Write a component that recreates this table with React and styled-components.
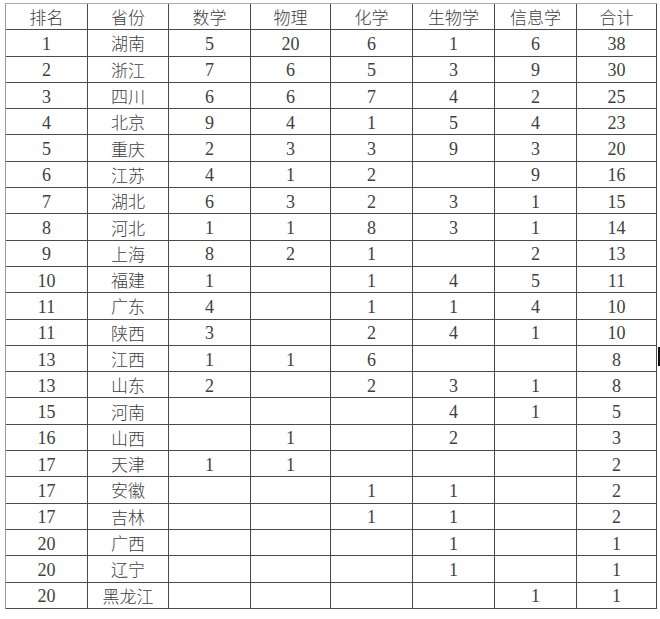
import React from "react";
import styled, { createGlobalStyle } from "styled-components";

const rows = [
  ["1", "湖南", "5", "20", "6", "1", "6", "38"],
  ["2", "浙江", "7", "6", "5", "3", "9", "30"],
  ["3", "四川", "6", "6", "7", "4", "2", "25"],
  ["4", "北京", "9", "4", "1", "5", "4", "23"],
  ["5", "重庆", "2", "3", "3", "9", "3", "20"],
  ["6", "江苏", "4", "1", "2", "", "9", "16"],
  ["7", "湖北", "6", "3", "2", "3", "1", "15"],
  ["8", "河北", "1", "1", "8", "3", "1", "14"],
  ["9", "上海", "8", "2", "1", "", "2", "13"],
  ["10", "福建", "1", "", "1", "4", "5", "11"],
  ["11", "广东", "4", "", "1", "1", "4", "10"],
  ["11", "陕西", "3", "", "2", "4", "1", "10"],
  ["13", "江西", "1", "1", "6", "", "", "8"],
  ["13", "山东", "2", "", "2", "3", "1", "8"],
  ["15", "河南", "", "", "", "4", "1", "5"],
  ["16", "山西", "", "1", "", "2", "", "3"],
  ["17", "天津", "1", "1", "", "", "", "2"],
  ["17", "安徽", "", "", "1", "1", "", "2"],
  ["17", "吉林", "", "", "1", "1", "", "2"],
  ["20", "广西", "", "", "", "1", "", "1"],
  ["20", "辽宁", "", "", "", "1", "", "1"],
  ["20", "黑龙江", "", "", "", "", "1", "1"],
];

const headers = ["排名", "省份", "数学", "物理", "化学", "生物学", "信息学", "合计"];

const GlobalStyle = createGlobalStyle`
  html, body {
    margin: 0;
    padding: 0;
    background: #ffffff;
  }
`;

const Page = styled.div`
  position: relative;
  width: 660px;
  height: 619px;
  padding: 3px 0 0 5px;
  box-sizing: border-box;
  overflow: hidden;
`;

const Grid = styled.div`
  display: grid;
  grid-template-columns: 82px 81px 82px 80px 82px 82px 82px 80px;
  grid-auto-rows: 26.3px;
  width: 652px;
  box-sizing: border-box;
  border-left: 1px solid #9a9a9a;
  border-top: 1px solid #a8a8a8;
`;

const Cell = styled.div`
  display: flex;
  align-items: center;
  justify-content: center;
  box-sizing: border-box;
  border-right: 1px solid #4a4a4a;
  border-bottom: 1px solid #4a4a4a;
  padding-top: ${(p) => (p.$cjk ? "0" : "2px")};
  font-family: ${(p) =>
    p.$cjk ? `"Noto Sans CJK SC", sans-serif` : `"Liberation Serif", serif`};
  font-size: ${(p) => (p.$cjk ? "17px" : "18px")};
  font-weight: ${(p) => (p.$cjk ? 300 : 400)};
  color: #404040;
  line-height: 1;
`;

const EdgeMark = styled.div`
  position: absolute;
  left: 658px;
  top: 347px;
  width: 2px;
  height: 19px;
  background: #111111;
`;

export default function App() {
  return (
    <Page>
      <GlobalStyle />
      <Grid>
        {headers.map((h) => (
          <Cell key={h} $cjk>
            {h}
          </Cell>
        ))}
        {rows.map((r, i) =>
          r.map((v, j) => (
            <Cell key={`${i}-${j}`} $cjk={j === 1}>
              {v}
            </Cell>
          ))
        )}
      </Grid>
      <EdgeMark />
    </Page>
  );
}
